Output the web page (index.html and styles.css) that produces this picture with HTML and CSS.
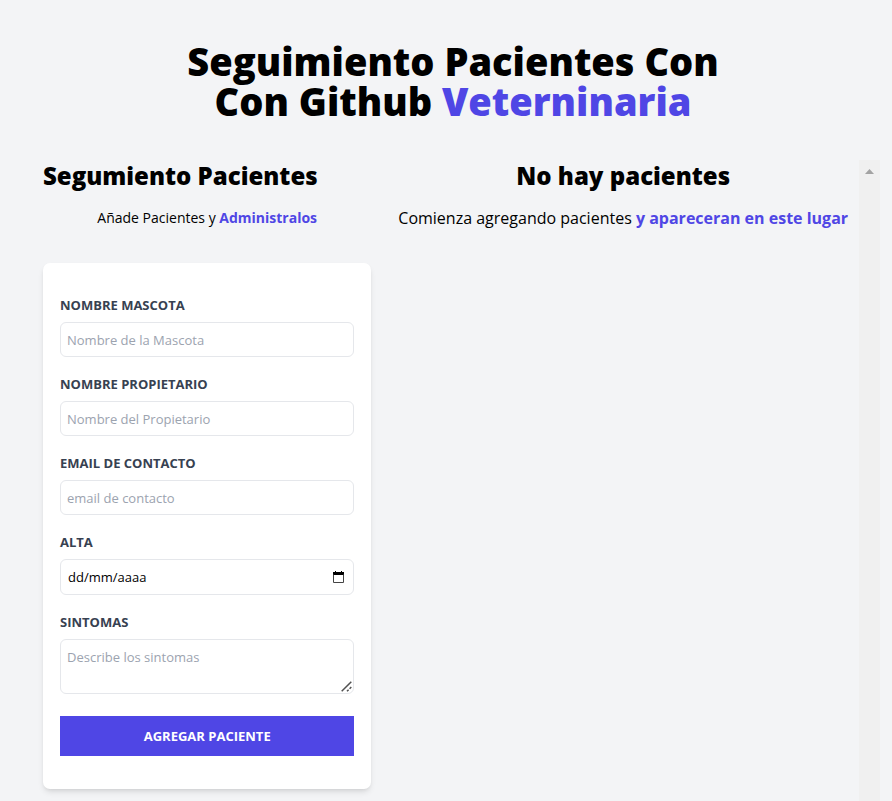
FILE: index.html
```html
<!DOCTYPE html>
<html lang="es">
<head>
  <meta charset="utf-8">
  <meta name="viewport" content="width=device-width, initial-scale=1">
  <title>Seguimiento Pacientes</title>
  <link rel="stylesheet" href="styles.css">
</head>
<body>
  <header class="header">
    <h1 class="title">Seguimiento Pacientes Con<br>Con Github <span class="accent">Veterninaria</span></h1>
  </header>
  <main class="layout">
    <section class="intake">
      <h2 class="heading">Segumiento Pacientes</h2>
      <p class="lead lead-small">Añade Pacientes y <span class="accent">Administralos</span></p>
      <form class="card">
        <div class="field">
          <label class="label" for="mascota">Nombre Mascota</label>
          <input class="control" id="mascota" type="text" placeholder="Nombre de la Mascota">
        </div>
        <div class="field">
          <label class="label" for="propietario">Nombre Propietario</label>
          <input class="control" id="propietario" type="text" placeholder="Nombre del Propietario">
        </div>
        <div class="field">
          <label class="label" for="email">Email de contacto</label>
          <input class="control" id="email" type="email" placeholder="email de contacto">
        </div>
        <div class="field">
          <label class="label" for="alta">Alta</label>
          <div class="control date">
            <input class="date-input" id="alta" type="text" placeholder="dd/mm/aaaa">
            <button class="date-button" type="button" aria-label="Abrir calendario">
              <svg width="11" height="12" viewBox="0 0 11 12" aria-hidden="true">
                <path d="M0 1h2V0h1v1h5V0h1v1h2v3H0z" fill="#000"/>
                <path d="M.5 3.500V11.500H10.500V3.500" fill="none" stroke="#444"/>
              </svg>
            </button>
          </div>
        </div>
        <div class="field">
          <label class="label" for="sintomas">Sintomas</label>
          <div class="area-wrap">
            <textarea class="control area" id="sintomas" rows="2" placeholder="Describe los sintomas"></textarea>
            <svg class="grip" width="11" height="11" viewBox="0 0 11 11" aria-hidden="true">
              <path d="M.7 10.300L10.300 .7M6 10.300l1.600-1.600M8.600 7.700l1.700-1.700" fill="none" stroke="#505050" stroke-width="1.500"/>
            </svg>
          </div>
        </div>
        <button class="submit" type="submit">Agregar paciente</button>
      </form>
    </section>
    <section class="patients">
      <div class="patients-body">
        <h2 class="heading heading-center">No hay pacientes</h2>
        <p class="lead">Comienza agregando pacientes <span class="accent">y apareceran en este lugar</span></p>
      </div>
      <div class="track" aria-hidden="true">
        <svg width="9" height="5" viewBox="0 0 9 5"><path d="M4.500 0L9 5H0z" fill="#a3a3a3"/></svg>
      </div>
    </section>
  </main>
</body>
</html>
```
FILE: styles.css
```css
* {
  box-sizing: border-box;
}

body {
  display: flex;
  flex-direction: column;
  min-height: 100vh;
  margin: 0;
  background: #f3f4f6;
  color: #000;
  font-family: "Open Sans", "Noto Sans", sans-serif;
}

h1,
h2,
p {
  margin: 0;
}

.header {
  padding: 41px 12px 39px 26px;
}

.title {
  font-size: 38px;
  line-height: 40px;
  font-weight: 800;
  text-align: center;
}

.accent {
  color: #4f46e5;
  font-weight: 700;
}

.title .accent {
  font-weight: 800;
}

.layout {
  display: grid;
  grid-template-columns: 2fr 3fr;
  gap: 16px;
  flex: 1;
  padding: 0 12px 0 43px;
}

.heading {
  font-size: 24px;
  line-height: 32px;
  font-weight: 800;
}

.heading-center {
  text-align: center;
}

.lead {
  margin-top: 12px;
  font-size: 16px;
  line-height: 28px;
  text-align: center;
}

.lead-small {
  font-size: 14px;
}

.card {
  margin: 31px 0 12px;
  padding: 31px 17px 33px;
  border-radius: 7px;
  background: #fff;
  box-shadow: 0 4px 6px -1px rgb(0 0 0 / 10%), 0 2px 4px -2px rgb(0 0 0 / 10%);
}

.field {
  margin-bottom: 16px;
}

.label {
  display: block;
  margin-bottom: 6px;
  color: #374151;
  font-size: 13px;
  line-height: 22px;
  font-weight: 700;
  text-transform: uppercase;
}

.control {
  display: block;
  width: 100%;
  height: 35px;
  padding: 0 6px;
  border: 1px solid #e5e7eb;
  border-radius: 6px;
  background: #fff;
  color: #000;
  font: 13px/20px "Open Sans", "Noto Sans", sans-serif;
}

.control::placeholder {
  color: #9ca3af;
}

.date {
  display: flex;
  align-items: center;
  height: 36px;
  padding: 0 9px 0 7px;
}

.date-input {
  flex: 1;
  min-width: 0;
  padding: 0;
  border: 0;
  background: none;
  font: inherit;
}

.date-input::placeholder {
  color: #000;
}

.date-button {
  display: flex;
  padding: 0;
  border: 0;
  background: none;
}

.area-wrap {
  position: relative;
}

.area {
  height: 55px;
  padding-top: 7px;
  resize: vertical;
}

.area::-webkit-resizer {
  background: transparent;
}

.grip {
  position: absolute;
  right: 2px;
  bottom: 2px;
  pointer-events: none;
}

.submit {
  display: block;
  width: 100%;
  height: 40px;
  margin-top: 22px;
  border: 0;
  background: #4f46e5;
  color: #fff;
  font: 700 13px/20px "Open Sans", "Noto Sans", sans-serif;
  text-transform: uppercase;
}

.patients {
  display: flex;
}

.patients-body {
  flex: 1;
}

.track {
  display: flex;
  justify-content: center;
  width: 21px;
  padding-top: 9px;
  background: #f0f0f0;
}
```
